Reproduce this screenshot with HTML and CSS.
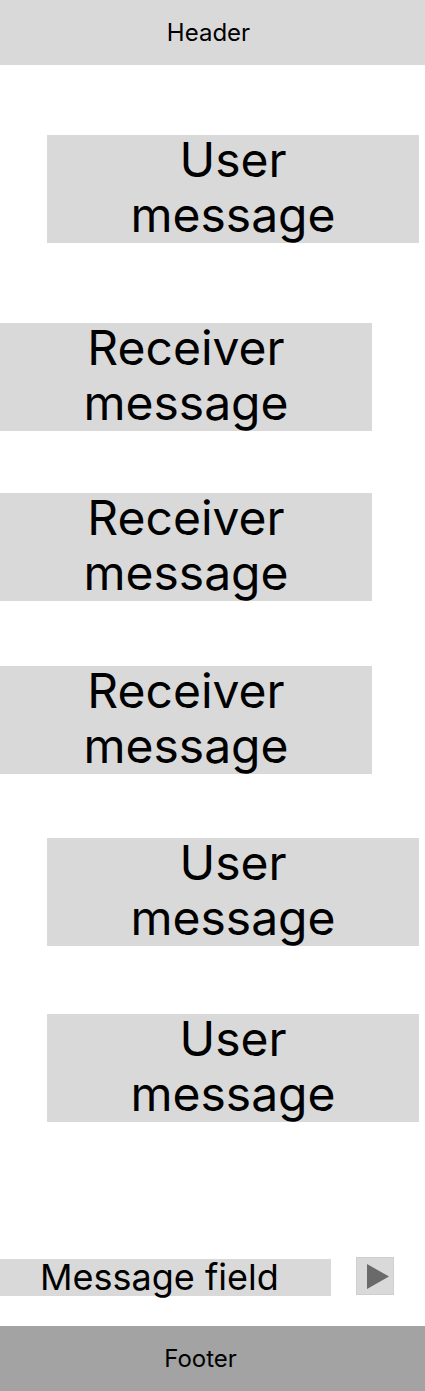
FILE: index.html
```html
<!DOCTYPE html>
<html lang="en">
<head>
<meta charset="utf-8">
<title>Chat</title>
<link rel="stylesheet" href="styles.css">
</head>
<body>
<div class="app">
  <header class="header">Header</header>
  <main class="messages">
    <div class="msg msg--user"><span class="msg-text">User message</span></div>
    <div class="msg msg--receiver gap-80"><span class="msg-text">Receiver message</span></div>
    <div class="msg msg--receiver gap-62"><span class="msg-text">Receiver message</span></div>
    <div class="msg msg--receiver gap-65"><span class="msg-text">Receiver message</span></div>
    <div class="msg msg--user gap-64"><span class="msg-text">User message</span></div>
    <div class="msg msg--user gap-68"><span class="msg-text">User message</span></div>
  </main>
  <div class="composer">
    <div class="field">Message field</div>
    <button class="send" type="button" aria-label="Send">
      <svg width="22" height="25" viewBox="0 0 22 25"><polygon points="0,0 22,12.5 0,25" fill="#6a6a6a"/></svg>
    </button>
  </div>
  <footer class="footer">Footer</footer>
</div>
</body>
</html>
```

FILE: styles.css
```css
* { box-sizing: border-box; }
html, body { margin: 0; padding: 0; background: #ffffff; }
body {
  font-family: Inter, "Noto Sans", "Liberation Sans", sans-serif;
  color: #000;
}
.app {
  display: flex;
  flex-direction: column;
  min-height: 1391px;
}
.header {
  height: 65px;
  background: #d9d9d9;
  display: flex;
  align-items: center;
  justify-content: center;
  font-size: 24px;
  padding-right: 8px;
}
.messages {
  display: flex;
  flex-direction: column;
  padding-top: 70px;
  flex: 1;
}
.msg {
  width: 372px;
  height: 108px;
  background: #d9d9d9;
  font-size: 48px;
  line-height: 55px;
  text-align: center;
  padding: 0 30px;
  overflow: visible;
}
.msg-text {
  display: block;
  margin-top: -3px;
}
.msg--user { margin-left: 47px; }
.msg--receiver { margin-left: 0; }
.gap-80 { margin-top: 80px; }
.gap-62 { margin-top: 62px; }
.gap-65 { margin-top: 65px; }
.gap-64 { margin-top: 64px; }
.gap-68 { margin-top: 68px; }
.composer {
  display: flex;
  align-items: flex-start;
  gap: 25px;
  height: 39px;
  margin-bottom: 30px;
}
.field {
  width: 331px;
  height: 37px;
  margin-top: 2px;
  background: #d9d9d9;
  font-size: 36px;
  line-height: 37px;
  padding-left: 40px;
  white-space: nowrap;
}
.send {
  width: 38px;
  height: 38px;
  padding: 0 0 0 10px;
  margin: 0;
  border: 1px solid #cfcfcf;
  background: #d9d9d9;
  display: flex;
  align-items: center;
  justify-content: flex-start;
}
.send svg { display: block; }
.footer {
  height: 65px;
  background: #a3a3a3;
  display: flex;
  align-items: center;
  justify-content: center;
  font-size: 24px;
  padding-right: 24px;
}
```
